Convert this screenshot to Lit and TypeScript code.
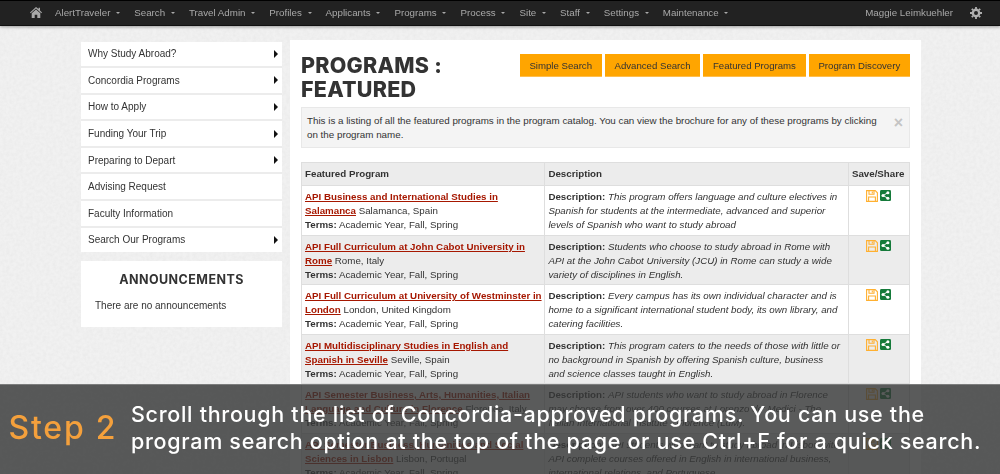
import { LitElement, html, css, svg } from "lit";
import { customElement } from "lit/decorators.js";

const NAV = ["AlertTraveler", "Search", "Travel Admin", "Profiles", "Applicants", "Programs", "Process", "Site", "Staff", "Settings", "Maintenance"];
const SIDE: [string, boolean][] = [
  ["Why Study Abroad?", true], ["Concordia Programs", true], ["How to Apply", true], ["Funding Your Trip", true],
  ["Preparing to Depart", true], ["Advising Request", false], ["Faculty Information", false], ["Search Our Programs", true],
];
const BTNS = ["Simple Search", "Advanced Search", "Featured Programs", "Program Discovery"];
const ROWS = [
  ["API Business and International Studies in Salamanca", "Salamanca, Spain", "This program offers language and culture electives in Spanish for students at the intermediate, advanced and superior levels of Spanish who want to study abroad"],
  ["API Full Curriculum at John Cabot University in Rome", "Rome, Italy", "Students who choose to study abroad in Rome with API at the John Cabot University (JCU) in Rome can study a wide variety of disciplines in English."],
  ["API Full Curriculum at University of Westminster in London", "London, United Kingdom", "Every campus has its own individual character and is home to a significant international student body, its own library, and catering facilities."],
  ["API Multidisciplinary Studies in English and Spanish in Seville", "Seville, Spain", "This program caters to the needs of those with little or no background in Spanish by offering Spanish culture, business and\u00a0science classes taught in English."],
  ["API Semester Business, Arts, Humanities, Italian Language and Culture in Florence", "Florence, Italy", "API students who want to study abroad in Florence may choose from over 400 courses at Lorenzo de' Medici - The Italian International Institute - Florence (LdM)."],
  ["API Semester Business, Humanities and Social Sciences in Lisbon", "Lisbon, Portugal", "API students who want to study abroad in Lisbon with API complete courses offered in English in international business, international relations, and Portuguese."],
];

const saveIcon = svg`<svg class="ic" width="12" height="12" viewBox="0 0 12 12" fill="none" stroke="#ffb030" stroke-width="1.1"><path d="M.6.6h8.6l2.2 2.2v8.600H.6z"/><path d="M3 .8v3.400h5V.8M2.600 11V7h6.800v4"/><path d="M6.300 1.400v2"/></svg>`;
const shareIcon = svg`<svg class="ic" width="11" height="11" viewBox="0 0 12 12"><rect width="12" height="12" rx="1.500" fill="#157a3a"/><g fill="#fff"><circle cx="3.300" cy="6" r="1.700"/><circle cx="8.600" cy="3" r="1.700"/><circle cx="8.600" cy="9" r="1.700"/></g><path d="M3.300 6 8.600 3M3.300 6l5.300 3" stroke="#fff" stroke-width="1"/></svg>`;

@customElement("app-root")
export class AppRoot extends LitElement {
  static styles = css`
    :host { display: block; width: 1000px; height: 474px; overflow: hidden; position: relative; background: #f1f1f1; font-family: "Liberation Sans", Arial, sans-serif; font-size: 9.75px; color: #333; }
    .tex { position: absolute; left: 0; top: 0; width: 1000px; height: 474px; }
    .nav { position: relative; box-sizing: border-box; height: 26px; background: #222; border-top: 1px solid #000; border-bottom: 1px solid #111; box-shadow: 0 1px 3px rgba(0,0,0,.35); display: flex; align-items: center; padding: 0 18px 1px 30px; color: #a9a9a9; filter: blur(.3px); }
    .home { margin-right: 13px; display: block; }
    .nav-items { display: flex; gap: 14px; }
    .nav-item { display: flex; align-items: center; gap: 5.8px; }
    .caret { width: 0; height: 0; border-left: 2.5px solid transparent; border-right: 2.5px solid transparent; border-top: 2.5px solid #a9a9a9; margin-top: 1px; }
    .user { margin-left: auto; margin-right: 17px; }
    .body { position: relative; display: flex; align-items: flex-start; padding: 14px 0 0 81px; gap: 8px; filter: blur(.3px); }
    .side { width: 201px; flex: none; padding-top: 1.5px; display: flex; flex-direction: column; gap: 9px; }
    .menu { display: flex; flex-direction: column; gap: 2px; background: #ececec; font-size: 10px; }
    .menu-item { height: 24.6px; background: #fff; display: flex; align-items: center; justify-content: space-between; padding: 0 4px 0 7px; color: #333; }
    .arrow { width: 0; height: 0; border-top: 4px solid transparent; border-bottom: 4px solid transparent; border-left: 4px solid #111; }
    .ann { background: #fff; height: 66px; box-sizing: border-box; padding-top: 11px; }
    .ann h3 { margin: 0; text-align: center; font: 700 12.5px/16px Inter, sans-serif; color: #333; letter-spacing: .45px; }
    .ann p { margin: 11px 0 0 14px; line-height: 14px; font-size: 10px; }
    .main { width: 609px; flex: none; background: #fff; padding: 14px 11px 20px; }
    .head { display: flex; justify-content: space-between; align-items: flex-start; }
    .title { margin: -1px 0 0; width: 180px; font: 800 21.5px/24px Inter, sans-serif; color: #333; letter-spacing: .25px; }
    .btns { display: flex; gap: 3px; }
    .btn { height: 22px; background: #ffa500; border-bottom: 1px solid #ffbe4d; padding: 0 9.75px; display: flex; align-items: center; color: #333; font-size: 9.65px; }
    .alert { position: relative; margin-top: 6px; background: #f4f4f4; border: 1px solid #e8e8e8; padding: 6px 24px 5px 5px; line-height: 14.3px; height: 28px; font-size: 9.8px; }
    .close { position: absolute; right: 6px; top: 6px; font-size: 16px; font-weight: 700; line-height: 18px; color: #c4c4c4; }
    table { margin-top: 14px; width: 609px; border-collapse: collapse; table-layout: fixed; }
    th, td { border: 1px solid #dedede; line-height: 14px; vertical-align: top; text-align: left; color: #333; }
    td { padding: 4px 3px 2.5px; height: 42px; }
    td.prog { padding-right: 0; }
    th { background: #ececec; font-weight: 700; height: 20.5px; box-sizing: border-box; padding: 4px 3px; }
    tr.odd td { background: #ececec; }
    .c1 { width: 243px; } .c2 { width: 303px; } .c3 { width: 61px; }
    .save { text-align: center; white-space: nowrap; }
    .ic { vertical-align: top; margin: 0 1px; }
    a { color: #a61700; font-weight: 700; text-decoration: underline; }
    .over { position: absolute; left: 0; right: 0; top: 384px; bottom: 0; background: rgba(54,55,55,.82); border-top: 1px solid #7c7d7d; display: flex; align-items: center; box-sizing: border-box; padding: 0 0 4px 8.5px; }
    .step { font: 500 32px/40px Inter, sans-serif; letter-spacing: 1.8px; color: #f4a03c; width: 122.5px; flex: none; white-space: nowrap; }
    .msg { font: 500 21.5px/26.5px Inter, sans-serif; color: #fff; white-space: nowrap; letter-spacing: .7px; }
  `;

  render() {
    return html`
      <svg class="tex" viewBox="0 0 1000 474">
        <filter id="paper"><feTurbulence type="fractalNoise" baseFrequency=".3" numOctaves="3" seed="4"/><feColorMatrix values="0 0 0 0 .5 0 0 0 0 .5 0 0 0 0 .5 .2 0 0 0 -.06"/></filter>
        <rect width="1000" height="474" filter="url(#paper)"/>
      </svg>
      <div class="nav">
        <svg class="home" width="12" height="11" viewBox="0 0 12 11" fill="#a9a9a9"><path d="M6 0 0 5.400l.7.8L6 1.600l5.300 4.600.7-.8-2-1.800V.8H8.600v1.300z"/><path d="M1.700 6.300 6 2.600l4.300 3.700V11H7.300V7.800H4.700V11h-3z"/></svg>
        <div class="nav-items">
          ${NAV.map((n) => html`<div class="nav-item">${n}<span class="caret"></span></div>`)}
        </div>
        <div class="user">Maggie Leimkuehler</div>
        <svg width="12" height="12" viewBox="0 0 12 12"><circle cx="6" cy="6" r="3.200" fill="none" stroke="#b0b0b0" stroke-width="2.400"/><path d="M6 0v12M0 6h12M1.800 1.800l8.400 8.400M10.200 1.800l-8.400 8.400" stroke="#b0b0b0" stroke-width="1.800" stroke-dasharray="2 8 2"/></svg>
      </div>
      <div class="body">
        <div class="side">
          <div class="menu">
            ${SIDE.map(([t, a]) => html`<div class="menu-item"><span>${t}</span>${a ? html`<span class="arrow"></span>` : ""}</div>`)}
          </div>
          <div class="ann">
            <h3>ANNOUNCEMENTS</h3>
            <p>There are no announcements</p>
          </div>
        </div>
        <div class="main">
          <div class="head">
            <h1 class="title">PROGRAMS : FEATURED</h1>
            <div class="btns">${BTNS.map((b) => html`<div class="btn">${b}</div>`)}</div>
          </div>
          <div class="alert">
            This is a listing of all the featured programs in the program catalog. You can view the brochure for any of these programs by clicking on the program name.
            <span class="close">×</span>
          </div>
          <table>
            <colgroup><col class="c1" /><col class="c2" /><col class="c3" /></colgroup>
            <thead><tr><th>Featured Program</th><th>Description</th><th>Save/Share</th></tr></thead>
            <tbody>
              ${ROWS.map((r, i) => html`<tr class=${i % 2 ? "odd" : ""}>
                <td class="prog"><a>${r[0]}</a> ${r[1]}<br /><b>Terms:</b> Academic Year, Fall, Spring</td>
                <td><b>Description:</b> <i>${r[2]}</i></td>
                <td class="save">${saveIcon}${shareIcon}</td>
              </tr>`)}
            </tbody>
          </table>
        </div>
      </div>
      <div class="over">
        <div class="step">Step 2</div>
        <div class="msg">Scroll through the list of Concordia-approved programs. You can use the<br />program search option at the top of the page or use Ctrl+F for a quick search.</div>
      </div>
    `;
  }
}
